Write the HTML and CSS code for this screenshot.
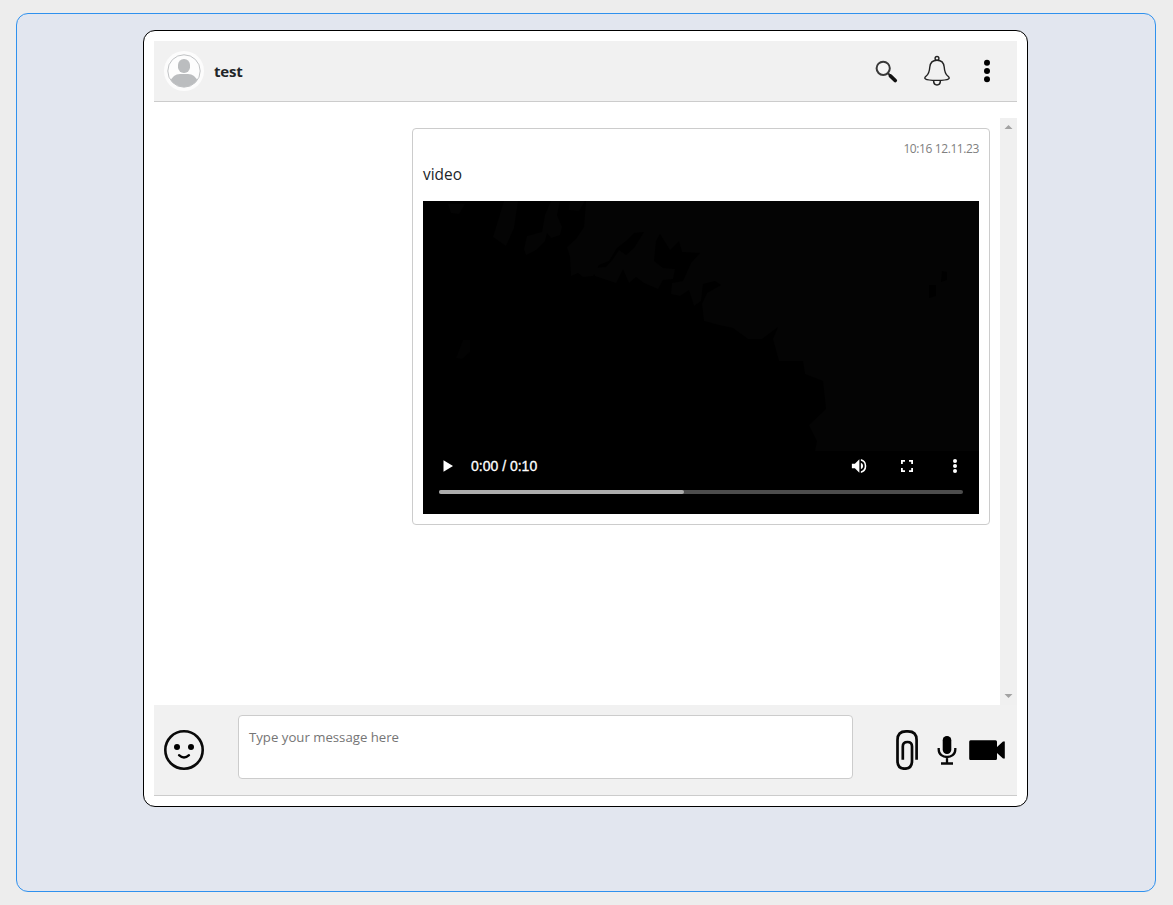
FILE: index.html
```
<!DOCTYPE html>
<html lang="en">
<head>
<meta charset="utf-8">
<title>Chat</title>
<link rel="stylesheet" href="styles.css">
</head>
<body>
<main class="page">
  <section class="chat">
    <header class="chat-header">
      <svg class="avatar" viewBox="0 0 40 40">
        <circle cx="20" cy="20" r="20" fill="#fcfcfc"/>
        <clipPath id="face"><circle cx="20" cy="20" r="16"/></clipPath>
        <circle cx="20" cy="20" r="16.2" fill="#fdfdfd" stroke="#b9bbbd" stroke-width=".9"/>
        <g clip-path="url(#face)" fill="#bbbdbf">
          <rect x="14" y="8" width="12" height="14" rx="5.8"/>
          <path d="M6 37V31Q9 23 16 23H24Q31 23 34 31V37Z"/>
        </g>
      </svg>
      <h1 class="name">test</h1>
      <div class="actions">
        <svg width="40" height="40" viewBox="0 0 40 40">
          <circle cx="16.200" cy="17.300" r="6.600" fill="#f6f6f6" stroke="#3a3a3a" stroke-width="2"/>
          <path d="M20.900 22.200L23.700 25" stroke="#333" stroke-width="2"/>
          <path d="M23.500 25L28.200 29.500" stroke="#111" stroke-width="3.800" stroke-linecap="round"/>
        </svg>
        <svg width="40" height="40" viewBox="0 0 40 40" fill="none" stroke="#222" stroke-width="1.4">
          <circle cx="20" cy="7.4" r="1.9"/>
          <path d="M20 9.2C15.500 9.200 13.200 12 12.800 16C12.500 20 12 23 9.200 25C7.800 26 7.300 27.300 8.500 28C11 29.800 29 29.800 31.500 28C32.700 27.300 32.200 26 30.800 25C28 23 27.500 20 27.200 16C26.800 12 24.500 9.200 20 9.200Z"/>
          <path d="M16.600 29.600C16.600 35.500 23.400 35.500 23.400 29.600" stroke-width="1.500"/>
        </svg>
        <svg width="40" height="40" viewBox="0 0 40 40">
          <circle cx="20" cy="11.800" r="3"/><circle cx="20" cy="20" r="3"/><circle cx="20" cy="28.200" r="3"/>
        </svg>
      </div>
    </header>

    <div class="history">
      <div class="messages">
        <article class="message">
          <time class="time">10:16 12.11.23</time>
          <p class="text">video</p>
          <div class="player">
            <svg class="frame" viewBox="0 0 556 313" fill="#040404">
              <path d="M163 0H556V250H392L394 240L386 224L403 208L400 180L382 173L380 160L356 160L350 138L355 126L339 138L325 138L310 127L296 124L281 120L279 103L284 92L298 84L292 80L280 83L278 100L271 105L266 89L257 95L248 93L249 82L260 80L268 62L277 52L259 51L256 40L247 49L237 33L233 40L231 60L240 67L252 68L250 78L240 79L235 88L221 82L213 76L206 82L200 68L193 82L172 75L169 67L183 66L190 58L196 49L203 54L211 47L221 31L211 32L203 40L194 47L186 60L176 64L170 75L160 76L155 72L148 75L147 56L144 46L153 38L161 26Z"/>
              <path d="M81 0H95L91 27L83 45L70 36ZM128 0H137L134 14L139 26L137 34L128 37L124 32L122 40L113 49L103 54L101 48L104 35L119 31L122 14ZM147 0H162L156 10L146 9ZM25 3H42L36 13L28 12Z"/>
              <path d="M40 139h7v12l-8 7-6-1z" fill="#030303"/>
              <path d="M519 70l5 1v8l-6 2zM506 84h7v11l-7 2z" fill="#000"/>
            </svg>
            <div class="controls">
              <svg width="18" height="18" viewBox="0 0 18 18"><path d="M4.500 3.300V14.700L14 9Z"/></svg>
              <span class="duration">0:00 / 0:10</span>
              <div class="tools">
                <svg width="18" height="18" viewBox="0 0 24 24"><path d="M2.500 9v6h4l6 6V3L6.500 9zM17.500 12a4.500 4.500 0 0 0-3-4.250v8.500A4.500 4.500 0 0 0 17.500 12zM14.500 2.700v2.400a7.200 7.200 0 0 1 0 13.800v2.400a9.600 9.600 0 0 0 0-18.600z"/></svg>
                <svg width="18" height="18" viewBox="0 0 18 18"><path d="M3 3h4v1.800H4.800V7H3zM11 3h4v4h-1.800V4.800H11zM3 11h1.800v2.200H7V15H3zM13.200 11H15v4h-4v-1.800h2.200z"/></svg>
                <svg width="18" height="18" viewBox="0 0 18 18"><circle cx="9" cy="4" r="2"/><circle cx="9" cy="9" r="2"/><circle cx="9" cy="14" r="2"/></svg>
              </div>
            </div>
            <div class="track"><div class="buffered"></div></div>
          </div>
        </article>
      </div>
      <div class="scrollbar">
        <svg width="17" height="17" viewBox="0 0 17 17"><path d="M4.500 11L8.500 7L12.500 11Z"/></svg>
        <svg width="17" height="17" viewBox="0 0 17 17"><path d="M4.500 6L8.500 10L12.500 6Z"/></svg>
      </div>
    </div>

    <footer class="composer">
      <svg class="emoji" width="40" height="40" viewBox="0 0 40 40">
        <circle cx="20" cy="20" r="18.700" fill="none" stroke="#0a0a0a" stroke-width="2.600"/>
        <circle cx="13" cy="17" r="3"/><circle cx="27" cy="17" r="3"/>
        <path d="M15 25.200Q20 29.800 25 25.200" fill="none" stroke="#000" stroke-width="2.300" stroke-linecap="round"/>
      </svg>
      <textarea class="input" placeholder="Type your message here"></textarea>
      <div class="attach">
        <svg width="40" height="40" viewBox="0 0 40 40" fill="none" stroke="#080808" stroke-width="2.700">
          <path d="M29.600 29.800V10Q29.600 1.400 21 1.400H19Q10.500 1.400 10.500 10V31Q10.500 38.700 17.700 38.700Q25 38.700 25 31V16.500Q25 12 20.500 12Q15.800 12 15.800 16.500V29.800"/>
        </svg>
        <svg width="40" height="40" viewBox="0 0 40 40">
          <rect x="15.700" y="6" width="8.600" height="18" rx="4.200"/>
          <path d="M11.700 18V19.500C11.700 29.500 28.300 29.500 28.300 19.500V18M20 27V33M14 33.500H26" fill="none" stroke="#080808" stroke-width="2.300"/>
        </svg>
        <svg width="40" height="40" viewBox="0 0 40 40">
          <path d="M3.500 10.200H28.500Q30 10.200 30 11.800V17L36 11.500H37.800V28.500H36L30 23V28.500Q30 30 28.500 30H3.500Q2.200 30 2.200 28.500V11.800Q2.200 10.200 3.500 10.200Z"/>
        </svg>
      </div>
    </footer>
  </section>
</main>
</body>
</html>
```

FILE: styles.css
```
* { box-sizing: border-box; }

body {
  margin: 0;
  padding: 13px 17px 13px 16px;
  height: 905px;
  overflow: hidden;
  background: #ededed;
  color: #212529;
  font-family: "Open Sans", "Noto Sans", sans-serif;
}

svg { display: block; flex: none; }

.page {
  height: 879px;
  padding: 16px 127px 0 126px;
  border: 1px solid #2f91ee;
  border-radius: 12px;
  background: #e2e6ef;
}

.chat {
  display: flex;
  flex-direction: column;
  height: 777px;
  padding: 10px;
  border: 1px solid #000;
  border-radius: 12px;
  background: #fff;
}

.chat-header {
  display: flex;
  align-items: center;
  height: 61px;
  padding: 0 10px;
  border-bottom: 1px solid #ccc;
  background: #f1f1f1;
}

.avatar { width: 40px; height: 40px; }

.name {
  margin: 0 0 0 10px;
  font-size: 15px;
  font-weight: 700;
  line-height: 24px;
  letter-spacing: -0.2px;
}

.actions { display: flex; gap: 10px; margin-left: auto; }

.history { display: flex; height: 587px; margin-top: 16px; }

.messages {
  flex: 1;
  display: flex;
  align-items: flex-start;
  justify-content: flex-end;
  padding: 10px;
}

.message {
  width: 578px;
  padding: 10px;
  border: 1px solid #ccc;
  border-radius: 4px;
}

.time {
  display: block;
  height: 18px;
  color: #808080;
  font-size: 12px;
  line-height: 20px;
  letter-spacing: -0.4px;
  text-align: right;
}

.text { margin: 6px 0 14px; font-size: 15.4px; line-height: 24px; }

.player {
  display: grid;
  grid-template-rows: 293px;
  height: 313px;
  padding: 0 16px 20px;
  background: #000;
}

.frame { grid-area: 1 / 1; width: 556px; height: 313px; margin: 0 -16px -20px; }

.controls {
  grid-area: 1 / 1;
  align-self: end;
  display: flex;
  align-items: center;
  height: 18px;
  margin-bottom: 19px;
  fill: #fff;
  color: #fff;
}

.track {
  grid-area: 1 / 1;
  align-self: end;
  height: 4px;
  border-radius: 2px;
  background: #4d4d4d;
}

.buffered { width: 245px; height: 4px; border-radius: 2px; background: #acacac; }

.duration {
  margin-left: 14px;
  font: 14px/18px "Liberation Sans", Arial, sans-serif;
  -webkit-text-stroke: 0.3px #fff;
}

.tools { display: flex; gap: 30px; margin: 0 -1px 0 auto; }

.scrollbar {
  display: flex;
  flex-direction: column;
  justify-content: space-between;
  width: 17px;
  background: #f0f0f0;
  fill: #a3a3a3;
}

.composer {
  display: flex;
  height: 91px;
  padding: 10px 10px 0;
  border-bottom: 1px solid #ccc;
  background: #f1f1f1;
}

.emoji { margin-top: 15px; }

.input {
  width: 615px;
  height: 64px;
  margin: 0 0 0 34px;
  padding: 10px;
  border: 1px solid #ccc;
  border-radius: 4px;
  background: #fff;
  font: 13.2px/23px "Open Sans", sans-serif;
  resize: none;
}

.input::placeholder { color: #757575; }

.attach { display: flex; margin: 15px 0 0 auto; }
```
